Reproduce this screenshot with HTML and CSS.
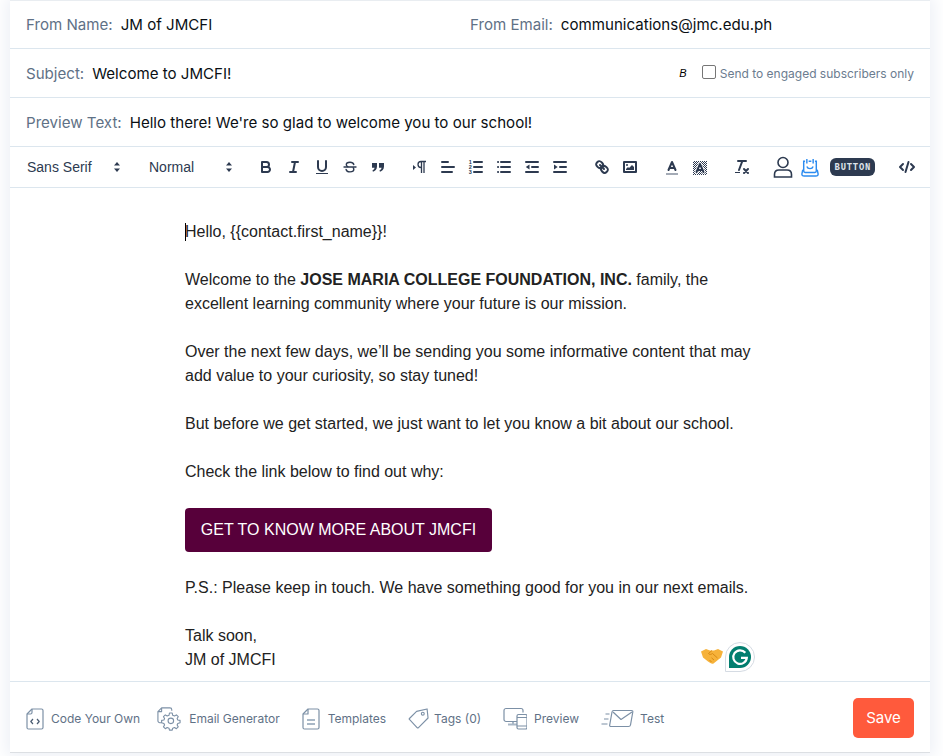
FILE: index.html
```html
<!DOCTYPE html>
<html>
<head>
    <meta name="viewport" content="width=device-width, initial-scale=1.0">
    <title>Email Editor</title>
    <link rel="stylesheet" href="styles.css">
</head>
<body>
    <svg class="defs" width="0" height="0">
        <defs>
            <pattern id="hatch" width="2" height="2" patternUnits="userSpaceOnUse">
                <rect width="1" height="1" fill="#2d3a50"/>
                <rect x="1" y="1" width="1" height="1" fill="#2d3a50"/>
            </pattern>
        </defs>
    </svg>

    <div class="panel">
        <!-- Header fields -->
        <div class="row row-from">
            <div class="field field-name"><span class="label">From Name:</span><span class="value">JM of JMCFI</span></div>
            <div class="field"><span class="label">From Email:</span><span class="value">communications@jmc.edu.ph</span></div>
        </div>
        <div class="row row-subject">
            <div class="field"><span class="label">Subject:</span><span class="value">Welcome to JMCFI!</span></div>
            <div class="engaged">
                <span class="beta">B</span>
                <span class="check"></span>
                <span class="engaged-text">Send to engaged subscribers only</span>
            </div>
        </div>
        <div class="row row-preview">
            <div class="field"><span class="label">Preview Text:</span><span class="value">Hello there! We're so glad to welcome you to our school!</span></div>
        </div>

        <!-- Toolbar -->
        <div class="toolbar">
            <div class="picker picker-font"><span>Sans Serif</span>
                <svg class="updown" viewBox="0 0 8 12"><path d="M4 1 7 4.6H1Z"/><path d="M4 11 1 7.4H7Z"/></svg>
            </div>
            <div class="picker picker-size"><span>Normal</span>
                <svg class="updown" viewBox="0 0 8 12"><path d="M4 1 7 4.6H1Z"/><path d="M4 11 1 7.4H7Z"/></svg>
            </div>
            <div class="tools tools-format">
                <svg class="ql" viewBox="0 0 18 18"><path d="M5 4H9.5A2.5 2.5 0 0 1 12 6.500A2.500 2.500 0 0 1 9.500 9H5Z"/><path d="M5 9H10.500A2.500 2.500 0 0 1 13 11.500A2.500 2.500 0 0 1 10.500 14H5Z"/></svg>
                <svg class="ql" viewBox="0 0 18 18"><path d="M7 4H13M5 14H11M8 14 10 4"/></svg>
                <svg class="ql" viewBox="0 0 18 18"><path d="M5 3V9A4 4 0 0 0 13 9V3"/><path class="solid" d="M3 15H15V16H3Z"/></svg>
                <svg class="ql thin" viewBox="0 0 18 18"><path d="M12.800 6.500C12.400 5 10.800 4.200 9 4.200C7 4.200 5.300 5.200 5.300 6.700C5.300 7.600 5.800 8.300 6.800 8.700M5.100 11.500C5.500 13 7.200 13.900 9 13.900C11 13.900 12.800 12.900 12.800 11.300C12.800 10.700 12.600 10.200 12.200 9.800"/><path d="M3 9H15"/></svg>
                <svg class="ql" viewBox="0 0 18 18"><path class="solid" d="M3 5H8V8.500C8 11.500 6 13 4 13.800L3.400 12.500C4.600 11.900 5.500 11 5.600 9.800H3Z"/><path class="solid" d="M10 5H15V8.500C15 11.500 13 13 11 13.800L10.400 12.500C11.600 11.900 12.500 11 12.600 9.800H10Z"/></svg>
            </div>
            <div class="tools tools-block">
                <svg class="ql" viewBox="0 0 18 18"><path class="solid" d="M2 7 5 9.500 2 12Z"/><path class="hair" d="M13 3.500V15M10.500 3.500V15M15 3.500H10A3 3 0 0 0 10 9.500H10.500"/></svg>
                <svg class="ql" viewBox="0 0 18 18"><path d="M3 9H15M3 14H13M3 4H9"/></svg>
                <svg class="ql" viewBox="0 0 18 18"><path d="M7 4H15M7 9H15M7 14H15"/><text class="digit" x="1.800" y="6">1</text><text class="digit" x="1.800" y="11">2</text><text class="digit" x="1.800" y="16">3</text></svg>
                <svg class="ql" viewBox="0 0 18 18"><path d="M6 4H15M6 9H15M6 14H15"/><path d="M3 4H3.100M3 9H3.100M3 14H3.100"/></svg>
                <svg class="ql" viewBox="0 0 18 18"><path d="M3 14H15M3 4H15M9 9H15"/><path class="solid" d="M6.500 6.500V11.500L2.800 9Z"/></svg>
                <svg class="ql" viewBox="0 0 18 18"><path d="M3 14H15M3 4H15M9 9H15"/><path class="solid" d="M3 6.500V11.500L6.700 9Z"/></svg>
            </div>
            <div class="tools tools-media">
                <svg class="ql" viewBox="0 0 18 18"><path d="M7 7 11 11"/><path d="M8.900 4.577A3.476 3.476 0 0 1 9.260 9.256A3.476 3.476 0 0 1 4.577 8.900C3.185 7.500 2.035 6.400 4.217 4.217S7.500 3.185 8.900 4.577Z"/><path d="M13.423 9.100A3.476 3.476 0 0 0 8.744 8.740A3.476 3.476 0 0 0 9.104 13.419C10.496 14.811 11.604 15.961 13.783 13.779S14.815 10.500 13.423 9.100Z"/></svg>
                <svg class="ql" viewBox="0 0 18 18"><rect x="3" y="4" width="12" height="10"/><circle class="solid" cx="6" cy="7" r="1"/><path class="solid" d="M5 12V11L7 9 8 10 11 7 13 9V12Z"/></svg>
            </div>
            <div class="tools tools-color">
                <svg class="ql" viewBox="0 0 18 18"><path class="muted" d="M3 16H15"/><path d="M5.500 12 9 4 12.500 12M11.630 10H6.380"/></svg>
                <svg class="ql" viewBox="0 0 18 18"><path class="hatch" d="M2 3H16V17H2Z"/><path class="halo" d="M5.500 14 9 6 12.500 14"/><path d="M5.500 14 9 6 12.500 14M11.630 12H6.380"/></svg>
            </div>
            <svg class="ql tool-clean" viewBox="0 0 18 18"><path d="M5 3H13M6 12 9.350 3M11 11 15 15M15 11 11 15"/><path class="solid" d="M2 14H7V15H2Z"/></svg>
            <div class="tools-custom">
                <svg class="person" viewBox="0 0 20 22"><circle cx="10" cy="6.500" r="5"/><path d="M1.500 21V18.500C1.500 15.500 3.500 14 6 14H14C16.500 14 18.500 15.500 18.500 18.500V21Z"/></svg>
                <svg class="calendar" viewBox="0 0 20 21"><path d="M4.500 3.500H3V14.500C3 15.500 3.500 16 4.500 16H15.500C16.500 16 17 15.500 17 14.500V3.500H15.500M8.500 3.500H11.500"/><path d="M6.500 1V6M13.500 1V6M6.500 9.500C7.500 12.500 12.500 12.500 13.500 9.500"/><path d="M2 13 1 17.500C.8 19 1.800 20 3.500 20H16.500C18.200 20 19.200 19 19 17.500L18 13"/></svg>
                <span class="btn-chip"><span>BUTTON</span></span>
                <svg class="ql tool-code" viewBox="0 0 18 18"><path d="M5 6 2 9 5 12M13 6 16 9 13 12M10.500 4 7.500 14"/></svg>
            </div>
        </div>

        <!-- Message body -->
        <div class="editor">
            <div class="message">
                <p><span class="caret"></span>Hello, {{contact.first_name}}!</p>
                <p>Welcome to the <strong>JOSE MARIA COLLEGE FOUNDATION, INC.</strong> family, the excellent learning community where your future is our mission.</p>
                <p>Over the next few days, we’ll be sending you some informative content that may add value to your curiosity, so stay tuned!</p>
                <p>But before we get started, we just want to let you know a bit about our school.</p>
                <p>Check the link below to find out why:</p>
                <a class="cta" href="#">GET TO KNOW MORE ABOUT JMCFI</a>
                <p>P.S.: Please keep in touch. We have something good for you in our next emails.</p>
                <p>Talk soon,<br>JM of JMCFI</p>
            </div>
            <svg class="shake" viewBox="0 0 22 16">
                <path d="M0 3.500 5 1 9 2.500H13L17 1 22 3.500 20 9.500 12.500 15.500C11 16.300 9 15 7 13.500L2 9.500Z"/>
                <path class="shake-line" d="M11 2.500 7.500 5.500C8.500 7 10 6.500 11.500 5.500L16.500 10M13 12 10.500 9.800M10.500 14 8.500 12"/>
            </svg>
            <div class="grammarly">
                <svg viewBox="0 0 24 24"><path class="g-back" d="M12 1A11 11 0 0 1 12 23H1V12A11 11 0 0 1 12 1Z"/><path class="g-letter" d="M17.300 7.800A6.800 6.800 0 1 0 18.800 12.800H13"/></svg>
            </div>
        </div>

        <!-- Footer actions -->
        <div class="actions">
            <a class="action action-code" href="#">
                <svg viewBox="0 0 18 22"><path d="M6 1H15.500C16.500 1 17 1.500 17 2.500V19.500C17 20.500 16.500 21 15.500 21H2.500C1.500 21 1 20.500 1 19.500V6Z"/><path d="M6 1V4.500C6 5.500 5.500 6 4.500 6H1"/><path class="dark" d="M7 11 4.800 13.500 7 16M11 11 13.200 13.500 11 16"/></svg>
                Code Your Own</a>
            <a class="action action-gen" href="#">
                <svg viewBox="0 0 26 26"><path d="M5 17H3C2 17 1 16 1 15V5L5 1H14C15 1 16 2 16 3V4"/><path d="M5 1V5H1"/><circle cx="15" cy="15" r="3"/><path d="M13.500 6.500H16.500L17 9 19 9.800 21 8.500 23 10.500 21.800 12.500 22.500 14 25 14.500V17L22.500 17.800 21.800 19.500 23 21.500 21 23.500 19 22.200 17 23 16.500 25H13.500L13 23 11 22.200 9 23.500 7 21.500 8.200 19.500 7.500 17.800 5 17V14.500L7.500 14 8.200 12.500 7 10.500 9 8.500 11 9.800 13 9Z"/></svg>
                Email Generator</a>
            <a class="action action-tpl" href="#">
                <svg viewBox="0 0 18 22"><path d="M6 1H15.500C16.500 1 17 1.500 17 2.500V19.500C17 20.500 16.500 21 15.500 21H2.500C1.500 21 1 20.500 1 19.500V6Z"/><path d="M6 1V6H1"/><path class="wide" d="M5 12H13M5 16H13"/></svg>
                Templates</a>
            <a class="action action-tags" href="#">
                <svg viewBox="0 0 22 22"><path d="M1.500 11 9 3.500 20 1 21 10.500 11 20.500C10.500 21 10 21 9.500 20.500L1.500 12C1.200 11.700 1.200 11.300 1.500 11Z"/><circle cx="15.500" cy="6" r="1.500"/></svg>
                Tags (0)</a>
            <a class="action action-preview" href="#">
                <svg viewBox="0 0 24 22"><path d="M14 14H3C2 14 1 13 1 12V3C1 2 2 1 3 1H18C19 1 20 2 20 3V5"/><path class="wide" d="M5 17H14M10 14.500V17"/><rect x="14" y="7" width="10" height="14.500" rx="1.500"/><path d="M14 10H24M14 18.500H24"/></svg>
                Preview</a>
            <a class="action action-test" href="#">
                <svg viewBox="0 0 32 19"><path d="M12 1.500H30C31 1.500 31.500 2 31.300 3L29 16C28.800 17 28 17.500 27 17.500H9.500C8.500 17.500 8 17 8.200 16L10.500 3C10.700 2 11 1.500 12 1.500Z"/><path d="M11.500 3 19.500 10.500 30.500 3"/><path d="M4 5H8M2.500 10H7M0 15H6"/></svg>
                Test</a>
            <a class="save" href="#">Save</a>
        </div>
    </div>
</body>
</html>
```

FILE: styles.css
```css
html, body {
    margin: 0;
    height: 100%;
}

body {
    background-color: #fff;
    overflow: hidden;
}

.defs {
    display: block;
    height: 0;
}

.panel {
    width: 920px;
    height: 752px;
    margin: 0 0 0 10px;
    background-color: #fff;
    border-top: 1px solid #e9edf1;
    box-shadow: 0 0 16px 4px #edf0f6;
    display: flex;
    flex-direction: column;
    font-family: "Inter", sans-serif;
}

/* Header fields */
.row {
    display: flex;
    align-items: center;
    padding: 0 16px;
    border-bottom: 1px solid #dce6ee;
    box-sizing: border-box;
    font-size: 15.1px;
}

.row-from {
    height: 48px;
}

.row-subject {
    height: 49px;
    justify-content: space-between;
}

.row-preview {
    height: 49px;
}

.field {
    display: flex;
}

.field-name {
    width: 444px;
}

.label {
    color: #5f7186;
    margin-right: 8px;
}

.value {
    color: #0a0f14;
}

.engaged {
    display: flex;
    align-items: center;
    font-size: 12px;
    color: #6b7c8f;
}

.beta {
    color: #000;
    font-family: "Liberation Sans", sans-serif;
    font-style: italic;
    font-size: 11px;
    margin-right: 15px;
}

.check {
    width: 12px;
    height: 12px;
    border: 1px solid #767676;
    border-radius: 2px;
    margin: -3px 4px 0 0;
}

/* Toolbar */
.toolbar {
    height: 41px;
    box-sizing: border-box;
    display: flex;
    align-items: center;
    padding-left: 17px;
    border-bottom: 1px solid #dce6ee;
    color: #2d3a50;
    font-size: 14px;
    font-family: "Liberation Sans", sans-serif;
}

.picker {
    display: flex;
    align-items: center;
    justify-content: space-between;
}

.picker-font {
    width: 94px;
    margin-right: 28px;
}

.picker-size {
    width: 84px;
    margin-right: 24px;
}

.updown {
    width: 8px;
    height: 12px;
    fill: #2d3a50;
}

.tools {
    display: flex;
    gap: 10px;
}

.ql {
    width: 18px;
    height: 18px;
    fill: none;
    stroke: #2d3a50;
    stroke-width: 2;
    stroke-linecap: round;
    stroke-linejoin: round;
    flex: none;
}

.ql.thin {
    stroke-width: 1.4;
}

.ql .solid {
    fill: #2d3a50;
    stroke: none;
}

.ql .hair {
    stroke-width: 1.3;
    stroke-linecap: butt;
}

.ql .muted {
    stroke: #a4abb6;
    stroke-linecap: butt;
}

.ql .hatch {
    fill: url(#hatch);
    stroke: none;
}

.ql .halo {
    stroke: #fff;
    stroke-width: 3.6;
}

.ql .digit {
    font-size: 5.5px;
    font-weight: bold;
    fill: #2d3a50;
    stroke: none;
}

.tools-format {
    margin-right: 24px;
}

.tools-block {
    margin-right: 24px;
}

.tools-media {
    margin-right: 24px;
}

.tools-color {
    margin-right: 24px;
}

.tools-custom {
    display: flex;
    align-items: center;
    margin-left: 22px;
}

.person, .calendar {
    fill: none;
    stroke-width: 1.6;
}

.person {
    width: 20px;
    height: 22px;
    stroke: #2d3a50;
    margin-right: 8px;
}

.calendar {
    width: 18px;
    height: 19px;
    stroke: #2d8cf0;
    margin-right: 11px;
}

.btn-chip {
    width: 45px;
    height: 18px;
    line-height: 18px;
    border-radius: 6px;
    background-color: #2d3a50;
    color: #dfe3ea;
    font-family: "Liberation Mono", monospace;
    font-size: 11px;
    font-weight: bold;
    letter-spacing: 1px;
    text-align: center;
    white-space: nowrap;
    overflow: hidden;
}

.btn-chip span {
    display: inline-block;
    transform: scaleX(0.8);
}

.tool-code {
    margin-left: 23px;
}

/* Message body */
.editor {
    flex: 1;
    position: relative;
    border-bottom: 1px solid #dce6ee;
    overflow: hidden;
    padding: 32px 0 0 175px;
    font-family: "Liberation Sans", sans-serif;
    font-size: 16px;
    line-height: 24px;
    color: #222;
}

.message {
    width: 570px;
}

.message p {
    margin: 0 0 24px;
}

.caret {
    display: inline-block;
    width: 1px;
    height: 18px;
    background-color: #000;
    vertical-align: -4px;
    margin-right: -1px;
}

.cta {
    display: block;
    width: 307px;
    height: 44px;
    line-height: 43px;
    margin-bottom: 24px;
    background-color: #57003a;
    border-radius: 4px;
    color: #fff;
    text-align: center;
    text-decoration: none;
}

.shake {
    position: absolute;
    left: 691px;
    top: 460px;
    width: 22px;
    height: 16px;
    fill: #f6b23a;
}

.shake-line {
    fill: none;
    stroke: #d98a14;
    stroke-width: 1;
}

.grammarly {
    position: absolute;
    left: 715px;
    top: 454px;
    width: 30px;
    height: 30px;
    box-sizing: border-box;
    padding: 2px;
    background-color: #fff;
    border: 1px solid #d5dbe3;
    border-radius: 50% 50% 50% 0;
}

.grammarly svg {
    display: block;
    width: 24px;
    height: 24px;
}

.g-back {
    fill: #027e6f;
}

.g-letter {
    fill: none;
    stroke: #fff;
    stroke-width: 2.2;
}

/* Footer actions */
.actions {
    height: 71px;
    box-sizing: border-box;
    display: flex;
    align-items: center;
    padding: 1px 16px 0 16px;
    border-bottom: 1px solid #dcdfe3;
}

.action {
    display: flex;
    align-items: center;
    color: #5f7186;
    font-size: 12px;
    line-height: 16px;
    text-decoration: none;
    margin: 2px 0 0 22px;
}

.action svg {
    fill: none;
    stroke: #7c90a6;
    stroke-width: 1.2;
    stroke-linejoin: round;
    flex: none;
}

.action svg .dark {
    stroke: #4b5d73;
}

.action svg .wide {
    stroke-width: 2;
    stroke: #a9b8c7;
}

.action-code {
    margin-left: 0;
}

.action-code svg {
    width: 18px;
    height: 22px;
    margin-right: 7px;
}

.action-gen {
    margin-left: 17px;
}

.action-gen svg {
    width: 24px;
    height: 24px;
    margin-right: 8px;
}

.action-tpl svg {
    width: 18px;
    height: 22px;
    margin-right: 8px;
}

.action-tags svg {
    width: 21px;
    height: 21px;
    margin-right: 5px;
}

.action-preview svg {
    width: 24px;
    height: 23px;
    margin-right: 7px;
}

.action-test svg {
    width: 33px;
    height: 19px;
    margin-right: 6px;
}

.save {
    margin-left: auto;
    width: 61px;
    height: 40px;
    line-height: 39px;
    background-color: #ff5a3c;
    border-radius: 5px;
    color: #fff;
    font-size: 15px;
    text-align: center;
    text-decoration: none;
}
```
